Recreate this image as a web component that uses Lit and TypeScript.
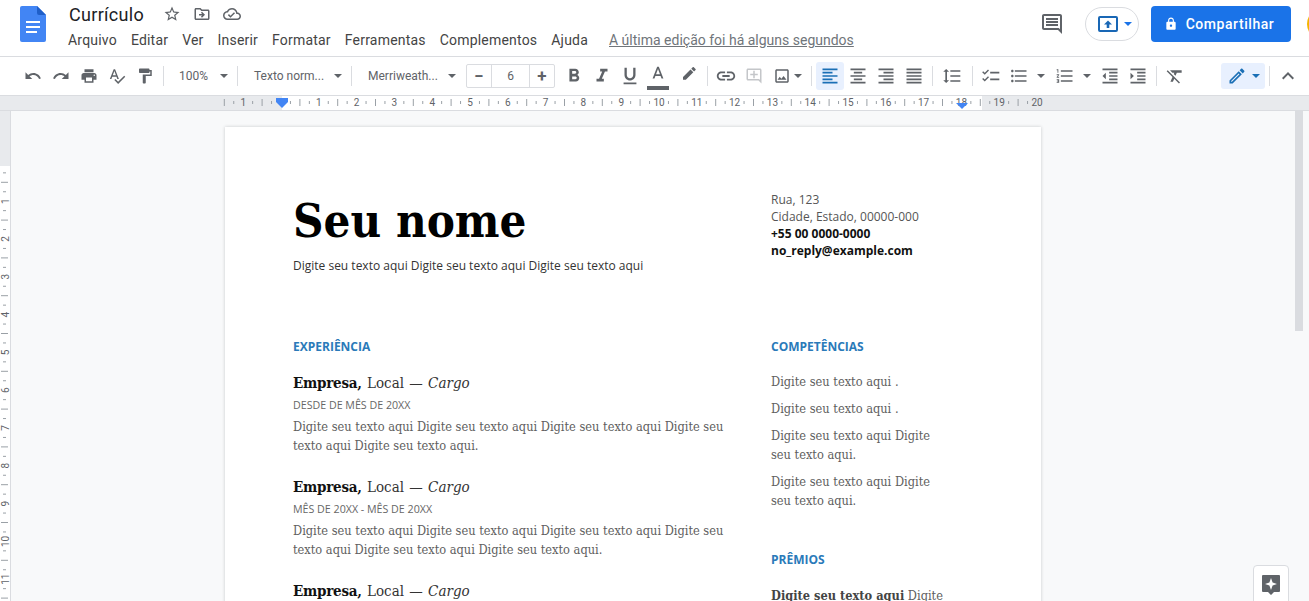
import { LitElement, html, css, svg } from "lit";
import { customElement } from "lit/decorators.js";

const ICONS: Record<string, string> = {
  undo: "M12.5 8c-2.65 0-5.05.99-6.9 2.6L2 7v9h9l-3.62-3.62c1.39-1.16 3.16-1.88 5.12-1.88 3.54 0 6.55 2.31 7.6 5.5l2.37-.78C21.08 11.03 17.15 8 12.5 8z",
  redo: "M18.4 10.6C16.55 8.99 14.15 8 11.5 8c-4.65 0-8.58 3.03-9.96 7.22L3.9 16c1.05-3.19 4.05-5.5 7.6-5.5 1.95 0 3.73.72 5.12 1.88L13 16h9V7l-3.6 3.6z",
  print: "M19 8H5c-1.66 0-3 1.34-3 3v6h4v4h12v-4h4v-6c0-1.66-1.34-3-3-3zm-3 11H8v-5h8v5zm3-7c-.55 0-1-.45-1-1s.45-1 1-1 1 .45 1 1-.45 1-1 1zm-1-9H6v4h12V3z",
  spell: "M12.45 16h2.09L9.43 3H7.57L2.46 16h2.09l1.12-3h5.64l1.14 3zm-6.02-5L8.5 5.48 10.57 11H6.43zm15.16.59l-8.09 8.09L9.83 16l-1.41 1.41 5.09 5.09L23 13l-1.41-1.41z",
  paint: "M18 4V3c0-.55-.45-1-1-1H5c-.55 0-1 .45-1 1v4c0 .55.45 1 1 1h12c.55 0 1-.45 1-1V6h1v4H9v11c0 .55.45 1 1 1h2c.55 0 1-.45 1-1v-9h8V4h-3z",
  bold: "M15.6 10.79c.97-.67 1.65-1.77 1.65-2.79 0-2.26-1.75-4-4-4H7v14h7.04c2.09 0 3.71-1.7 3.71-3.79 0-1.52-.86-2.82-2.15-3.42zM10 6.5h3c.83 0 1.5.67 1.5 1.5s-.67 1.5-1.5 1.5h-3v-3zm3.5 9H10v-3h3.5c.83 0 1.5.67 1.5 1.5s-.67 1.5-1.5 1.5z",
  italic: "M10 4v3h2.21l-3.42 8H6v3h8v-3h-2.21l3.42-8H18V4z",
  underline: "M12 17c3.31 0 6-2.69 6-6V3h-2.5v8c0 1.93-1.57 3.5-3.5 3.5S8.5 12.93 8.5 11V3H6v8c0 3.31 2.69 6 6 6zm-7 2v2h14v-2H5z",
  color: "M11 1L5.5 15h2.25l1.12-3h6.25l1.12 3h2.25L13 1h-2zm-1.38 9L12 3.67 14.38 10H9.62z",
  marker: "M17.75 7L14 3.25l-10 10V17h3.75l10-10zm2.96-2.96c.39-.39.39-1.02 0-1.41L18.37.29c-.39-.39-1.02-.39-1.41 0L15 2.25 18.75 6l1.96-1.96z",
  link: "M3.9 12c0-1.71 1.39-3.1 3.1-3.1h4V7H7c-2.76 0-5 2.24-5 5s2.24 5 5 5h4v-1.9H7c-1.71 0-3.1-1.39-3.1-3.1zM8 13h8v-2H8v2zm9-6h-4v1.9h4c1.71 0 3.1 1.39 3.1 3.1s-1.39 3.1-3.1 3.1h-4V17h4c2.76 0 5-2.24 5-5s-2.24-5-5-5z",
  addComment: "M20 2H4c-1.1 0-2 .9-2 2v12c0 1.1.9 2 2 2h14l4 4V4c0-1.1-.9-2-2-2zm0 15.17L18.83 16H4V4h16v13.17zM13 5h-2v4H7v2h4v4h2v-4h4V9h-4z",
  image: "M19 5v14H5V5h14m0-2H5c-1.1 0-2 .9-2 2v14c0 1.1.9 2 2 2h14c1.1 0 2-.9 2-2V5c0-1.1-.9-2-2-2zm-4.86 8.86l-3 3.87L9 13.14 6 17h12l-3.86-5.14z",
  left: "M15 15H3v2h12v-2zm0-8H3v2h12V7zM3 13h18v-2H3v2zm0 8h18v-2H3v2zM3 3v2h18V3H3z",
  center: "M7 15v2h10v-2H7zm-4 6h18v-2H3v2zm0-8h18v-2H3v2zm4-6v2h10V7H7zM3 3v2h18V3H3z",
  right: "M3 21h18v-2H3v2zm6-4h12v-2H9v2zm-6-4h18v-2H3v2zm6-4h12V7H9v2zM3 3v2h18V3H3z",
  justify: "M3 21h18v-2H3v2zm0-4h18v-2H3v2zm0-4h18v-2H3v2zm0-4h18V7H3v2zm0-6v2h18V3H3z",
  spacing: "M6 7h2.5L5 3.5 1.5 7H4v10H1.5L5 20.5 8.5 17H6V7zm4-2v2h12V5H10zm0 14h12v-2H10v2zm0-6h12v-2H10v2z",
  check: "M11 7h11v2H11zM11 15h11v2H11zM4.5 10.6L1.4 7.5l1.2-1.2 1.9 1.9 3.9-3.9 1.2 1.2zM4.5 18.6l-3.1-3.1 1.2-1.2 1.9 1.9 3.9-3.9 1.2 1.2z",
  bullets: "M4 10.5c-.83 0-1.5.67-1.5 1.5s.67 1.5 1.5 1.5 1.5-.67 1.5-1.5-.67-1.5-1.5-1.5zm0-6c-.83 0-1.5.67-1.5 1.5S3.17 7.5 4 7.5 5.5 6.83 5.5 6 4.83 4.5 4 4.5zm0 12c-.83 0-1.5.68-1.5 1.5s.68 1.5 1.5 1.5 1.5-.68 1.5-1.5-.67-1.5-1.5-1.5zM7 19h14v-2H7v2zm0-6h14v-2H7v2zm0-8v2h14V5H7z",
  numbers: "M2 17h2v.5H3v1h1v.5H2v1h3v-4H2v1zm1-9h1V4H2v1h1v3zm-1 3h1.8L2 13.1v.9h3v-1H3.2L5 10.9V10H2v1zm5-6v2h14V5H7zm0 14h14v-2H7v2zm0-6h14v-2H7v2z",
  outdent: "M11 17h10v-2H11v2zm-8-5l4 4V8l-4 4zm0 9h18v-2H3v2zM3 3v2h18V3H3zm8 6h10V7H11v2zm0 4h10v-2H11v2z",
  indent: "M3 21h18v-2H3v2zM3 8v8l4-4-4-4zm8 9h10v-2H11v2zM3 3v2h18V3H3zm8 6h10V7H11v2zm0 4h10v-2H11v2z",
  clear: "M3.27 5L2 6.27l6.97 6.97L6.5 19h3l1.57-3.66L16.73 21 18 19.73 3.55 5.27 3.27 5zM6 5v.18L8.82 8h2.4l-.72 1.68 2.1 2.1L14.21 8H20V5H6z",
  pencil: "M14.06 9.02l.92.92L5.92 19H5v-.92l9.06-9.06M17.66 3c-.25 0-.51.1-.7.29l-1.83 1.83 3.75 3.75 1.83-1.83c.39-.39.39-1.02 0-1.41l-2.34-2.34c-.2-.2-.45-.29-.71-.29zm-3.6 3.19L3 17.25V21h3.75L17.81 9.94l-3.75-3.75z",
  chevron: "M7.41 15.41L12 10.83l4.59 4.58L18 14l-6-6-6 6z",
  comments: "M21.99 4c0-1.1-.89-2-1.99-2H4c-1.1 0-2 .9-2 2v12c0 1.1.9 2 2 2h14l4 4-.01-18zM20 4v13.17L18.83 16H4V4h16zM6 12h12v2H6zm0-3h12v2H6zm0-3h12v2H6z",
  lock: "M18 8h-1V6c0-2.76-2.24-5-5-5S7 3.24 7 6v2H6c-1.1 0-2 .9-2 2v10c0 1.1.9 2 2 2h12c1.1 0 2-.9 2-2V10c0-1.1-.9-2-2-2zm-6 9c-1.1 0-2-.9-2-2s.9-2 2-2 2 .9 2 2-.9 2-2 2zm3.1-9H8.9V6c0-1.71 1.39-3.1 3.1-3.1 1.71 0 3.1 1.39 3.1 3.1v2z",
  star: "M22 9.24l-7.19-.62L12 2 9.19 8.63 2 9.24l5.46 4.73L5.82 21 12 17.27 18.18 21l-1.63-7.03L22 9.24zM12 15.4l-3.76 2.27 1-4.28-3.32-2.88 4.38-.38L12 6.1l1.71 4.04 4.38.38-3.32 2.88 1 4.28L12 15.4z",
  folder: "M20 6h-8l-2-2H4c-1.1 0-2 .9-2 2v12c0 1.1.9 2 2 2h16c1.1 0 2-.9 2-2V8c0-1.1-.9-2-2-2zm0 12H4V6h5.17l2 2H20v10zM12.16 12H8v2h4.16l-1.59 1.59L12 17l4-4-4-4-1.41 1.41z",
  cloud: "M19.35 10.04C18.67 6.59 15.64 4 12 4 9.11 4 6.6 5.64 5.35 8.04 2.34 8.36 0 10.91 0 14c0 3.31 2.69 6 6 6h13c2.76 0 5-2.24 5-5 0-2.64-2.05-4.78-4.65-4.96zM19 18H6c-2.21 0-4-1.79-4-4 0-2.05 1.53-3.76 3.56-3.97l1.07-.11.5-.95C8.08 7.14 9.94 6 12 6c2.62 0 4.88 1.86 5.39 4.43l.3 1.5 1.53.11c1.56.1 2.78 1.41 2.78 2.96 0 1.65-1.35 3-3 3zm-9-3.82l-2.09-2.09L6.5 13.5 10 17l6.01-6.01-1.41-1.41z",
};

const icon = (name: string, size = 18, cls = "") => html`<svg class="ic ${cls}" width=${size} height=${size} viewBox="0 0 24 24"><path d=${ICONS[name]}></path></svg>`;
const btn = (name: string, size = 18, cls = "") => html`<div class="btn ${cls}">${icon(name, size)}</div>`;
const caret = html`<span class="caret"></span>`;
const sep = html`<span class="sep"></span>`;

const MENU = ["Arquivo", "Editar", "Ver", "Inserir", "Formatar", "Ferramentas", "Complementos", "Ajuda"];
const CM = 37.8;

function hRuler() {
  const ticks = [];
  for (let n = -2; n <= 20; n++) {
    const x = 281 + n * CM;
    if (n !== 0 && n >= -1) {
      ticks.push(svg`<text x=${x} y="10" text-anchor="middle">${Math.abs(n)}</text>`);
    }
    if (n === -2) {
      ticks.push(svg`<path d="M${x + 18.9} 3v7M${x + 28.35} 5v3" />`);
    } else if (n < 20) {
      ticks.push(svg`<path d="M${x + 9.45} 5v3M${x + 18.9} 3v7M${x + 28.35} 5v3" />`);
    }
  }
  return html`<svg class="hruler" width="1309" height="14" viewBox="0 0 1309 14">
    <rect x="282" y="0" width="700" height="14" fill="#fff" stroke="none"></rect>
    ${ticks}
    <path class="marker" d="M276 2h12v4l-6 6-6-6z"></path>
    <path class="marker" d="M956 7h12l-6 6z"></path>
  </svg>`;
}

function vRuler() {
  const ticks = [];
  for (let n = 0; n <= 11; n++) {
    const y = 52.4 + n * CM;
    if (n > 0) {
      ticks.push(svg`<text x="0" y="0" text-anchor="middle" transform="translate(8.5 ${y}) rotate(-90)">${n}</text>`);
    }
    ticks.push(svg`<path d="M3 ${y + 9.45}h3M1 ${y + 18.9}h7M3 ${y + 28.35}h3" />`);
  }
  return html`<svg class="vruler" width="10" height="491" viewBox="0 0 10 491">
    <rect x="0" y="55" width="10" height="436" fill="#fff" stroke="none"></rect>
    ${ticks}
  </svg>`;
}

@customElement("app-root")
export class AppRoot extends LitElement {
  static styles = css`
    :host {
      display: flex;
      flex-direction: column;
      height: 601px;
      overflow: hidden;
      background: #f8f9fa;
      font-family: Roboto, sans-serif;
      color: #3c4043;
    }
    .ic { fill: #5f6368; display: block; flex: none; }

    .top {
      display: flex;
      height: 56px;
      flex: none;
      background: #fff;
      border-bottom: 1px solid #dadce0;
      box-sizing: content-box;
    }
    .logo { margin: 6px 23px 0 20px; flex: none; }
    .titles { flex: 1; display: flex; flex-direction: column; }
    .title-row { display: flex; align-items: center; height: 28px; }
    .doc-title { font: 18px Roboto, sans-serif; color: #202124; width: 94px; letter-spacing: .3px; }
    .title-row .ic { margin-right: 12px; }
    .menu { display: flex; align-items: center; gap: 14px; font-size: 14px; letter-spacing: .2px; color: #444; margin: 3px 0 0 -1px; height: 18px; }
    .last-edit { color: #70757a; text-decoration: underline; margin-left: 7px; letter-spacing: 0; }
    .actions { display: flex; align-items: center; height: 48px; flex: none; }
    .comments { margin-right: 21px; }
    .pill {
      width: 54px; height: 34px; border: 1px solid #dadce0; border-radius: 17px; box-sizing: border-box;
      display: flex; align-items: center; gap: 6px; margin-right: 12px; padding-left: 12px;
    }
    .pill .caret { border-top-color: #1a73e8; margin: 0; }
    .share {
      width: 140px; height: 36px; background: #1a73e8; border-radius: 4px; box-sizing: border-box; padding-right: 4px;
      color: #fff; font: 500 14px Roboto, sans-serif; letter-spacing: .55px;
      display: flex; align-items: center; justify-content: center; gap: 8px;
    }
    .share .ic { fill: #fff; }
    .avatar { width: 32px; height: 32px; border-radius: 50%; background: #f4b400; margin-left: 16px; margin-right: -30px; flex: none; }

    .toolbar {
      display: flex; align-items: center; height: 38px; flex: none; padding-left: 19px;
      background: #fff; border-bottom: 1px solid #dadce0; color: #5f6368;
    }
    .btn { width: 28px; height: 28px; display: flex; align-items: center; justify-content: center; flex: none; border-radius: 3px; box-sizing: border-box; }
    .btn.on { background: #e8f0fe; }
    .btn.on .ic { fill: #1a6fb5; }
    .btn.off .ic { fill: #c4c6c9; }
    .sep { width: 1px; height: 20px; background: #dadce0; flex: none; margin: 0 4px; }
    .caret { width: 0; height: 0; border: 4px solid transparent; border-bottom: 0; flex: none; display: block; border-top-color: #5f6368; }
    .select { display: flex; align-items: center; justify-content: space-between; font-size: 12px; color: #5f6368; flex: none; box-sizing: border-box; }
    .sel-zoom { width: 65px; padding: 0 5px 0 11px; }
    .sel-style { width: 105px; padding: 0 5px 0 12px; }
    .sel-font { width: 104px; padding: 0 4px 0 12px; }
    .stepper { display: flex; height: 24px; width: 89px; border: 1px solid #dadce0; box-sizing: border-box; flex: none; margin: 0 5px 0 6px; border-radius: 2px; }
    .stepper > div { display: flex; align-items: center; justify-content: center; font-size: 12px; color: #5f6368; }
    .stepper .step { width: 24px; font-size: 17px; font-weight: 700; }
    .stepper .val { flex: 1; border: solid #dadce0; border-width: 0 1px; }
    .color-btn { flex-direction: column; justify-content: flex-start; margin-right: 3px; padding-top: 4px; }
    .color-btn .bar { width: 22px; height: 4px; background: #5f6368; }
    .img-btn { width: 24px; justify-content: flex-start; padding-left: 5px; }
    .img-caret { margin: 0 5px 0 2px; }
    .list-caret { margin: 0 6px 0 4px; }
    .list-caret.last { margin-right: 5px; }
    .spacing-btn { margin: 0 2px 0 1px; }
    .edit { width: 44px; height: 26px; background: #e8f0fe; border-radius: 3px; display: flex; align-items: center; justify-content: center; gap: 5px; margin-left: 32px; flex: none; }
    .edit .ic { fill: #1a6fb5; }
    .edit .caret { border-top-color: #1a6fb5; }

    .hruler { display: block; flex: none; background: #e8eaed; border-bottom: 1px solid #dadce0; box-sizing: content-box; }
    .hruler text, .vruler text { font: 10px Roboto, sans-serif; fill: #5f6368; stroke: none; }
    .hruler path, .vruler path { stroke: #9aa0a6; stroke-width: 1; fill: none; }
    .hruler .marker { fill: #4285f4; stroke: none; }

    .main { flex: 1; display: flex; min-height: 0; position: relative; }
    .vruler { display: block; flex: none; background: #e8eaed; border-right: 1px solid #dadce0; box-sizing: content-box; }
    .scroller { flex: 1; overflow: hidden; padding: 16px 0 0 214px; }
    .scrollbar { width: 15px; flex: none; }
    .thumb { width: 8px; height: 220px; background: #dadce0; margin-left: 1px; }
    .explore {
      position: absolute; right: 20px; top: 454px; width: 36px; height: 40px;
      background: #fff; border: 1px solid #dadce0; border-radius: 4px; box-sizing: border-box;
      display: flex; justify-content: center; padding-top: 8px;
    }

    .page {
      width: 816px; background: #fff; box-sizing: border-box; height: 900px;
      box-shadow: 0 0 3px rgba(60, 64, 67, .25);
      padding: 64px 0 0 68px;
      display: grid;
      grid-template-columns: 478px 250px;
      grid-template-rows: 148px auto;
      align-content: start;
      font-family: "Open Sans", sans-serif;
      color: #666;
    }
    .name { font: 700 47px/58px "DejaVu Serif Condensed", "DejaVu Serif", serif; color: #000; margin: 1px 0 7px; }
    .lead { font-size: 12px; line-height: 17px; color: #333; }
    .contact { font-size: 12px; line-height: 17px; color: #555; }
    .contact b { color: #111; display: block; font-weight: 700; }
    .head { font-size: 12px; line-height: 16px; font-weight: 700; color: #2a7ab9; margin: 0; }
    .job { font: 15px/20px "DejaVu Serif Condensed", "DejaVu Serif", serif; color: #333; word-spacing: 1px; }
    .job b { color: #111; letter-spacing: -.25px; }
    .job-first { margin-top: 18px; }
    .job-next { margin-top: 22px; }
    .date { font-size: 10.67px; line-height: 14px; margin-top: 5px; color: #666; }
    .text { font: 12.7px/19px "DejaVu Serif Condensed", "DejaVu Serif", serif; color: #606060; margin-top: 5px; white-space: nowrap; }
    .skill { font: 12.7px/19px "DejaVu Serif Condensed", "DejaVu Serif", serif; color: #606060; white-space: nowrap; margin-top: 8px; }
    .skill.first { margin-top: 17px; }
    .skill.after-awards { margin-top: 18px; }
    .awards { margin-top: 42px; }
    .skill b { color: #444; }
  `;

  private job(date: string, line2: string) {
    return html`
      <div class="date">${date}</div>
      <div class="text">Digite seu texto aqui Digite seu texto aqui Digite seu texto aqui Digite seu<br />${line2}</div>
    `;
  }

  private jobTitle(cls: string) {
    return html`<div class="job ${cls}"><b>Empresa,</b> Local — <i>Cargo</i></div>`;
  }

  render() {
    return html`
      <div class="top">
        <svg class="logo" width="26" height="36" viewBox="0 0 26 36">
          <path d="M2 0h15l9 9v25a2 2 0 0 1-2 2H2a2 2 0 0 1-2-2V2a2 2 0 0 1 2-2z" fill="#4285f4"></path>
          <path d="M17 0l9 9h-7a2 2 0 0 1-2-2z" fill="#1f5fc9"></path>
          <path d="M6 15h14v2H6zM6 20h14v2H6zM6 25h11v2H6z" fill="#fff"></path>
        </svg>
        <div class="titles">
          <div class="title-row">
            <div class="doc-title">Currículo</div>
            ${icon("star", 18)} ${icon("folder", 18)} ${icon("cloud", 18)}
          </div>
          <div class="menu">
            ${MENU.map((m) => html`<span>${m}</span>`)}
            <span class="last-edit">A última edição foi há alguns segundos</span>
          </div>
        </div>
        <div class="actions">
          ${icon("comments", 24, "comments")}
          <div class="pill">
            <svg width="20" height="16" viewBox="0 0 20 16">
              <rect x="1" y="1" width="18" height="14" rx="1" fill="none" stroke="#1967b5" stroke-width="2"></rect>
              <path d="M10 4.5l-4 4h2.7V12h2.6V8.5H14z" fill="#1967b5"></path>
            </svg>
            ${caret}
          </div>
          <div class="share">${icon("lock", 14)}Compartilhar</div>
          <div class="avatar"></div>
        </div>
      </div>

      <div class="toolbar">
        ${btn("undo")}${btn("redo")}${btn("print")}${btn("spell")}${btn("paint")}${sep}
        <div class="select sel-zoom"><span>100%</span>${caret}</div>${sep}
        <div class="select sel-style"><span>Texto norm...</span>${caret}</div>${sep}
        <div class="select sel-font"><span>Merriweath...</span>${caret}</div>
        <div class="stepper"><div class="step">−</div><div class="val">6</div><div class="step">+</div></div>
        ${btn("bold", 22)}${btn("italic", 22)}${btn("underline", 22)}
        <div class="btn color-btn">${icon("color", 20)}<div class="bar"></div></div>
        ${btn("marker", 18)}${sep}
        ${btn("link", 22)}${btn("addComment", 18, "off")}${btn("image", 18, "img-btn")}
        <span class="caret img-caret"></span>${sep}
        ${btn("left", 20, "on")}${btn("center", 20)}${btn("right", 20)}${btn("justify", 20)}${sep}
        ${btn("spacing", 20, "spacing-btn")}${sep}
        ${btn("check", 20)}${btn("bullets", 20)}<span class="caret list-caret"></span>
        ${btn("numbers", 20)}<span class="caret list-caret last"></span>
        ${btn("outdent", 20)}${btn("indent", 20)}${sep}${btn("clear", 20)}
        <div class="edit">${icon("pencil", 20)}${caret}</div>${sep}
        ${btn("chevron", 24)}
      </div>

      ${hRuler()}

      <div class="main">
        ${vRuler()}
        <div class="scroller">
          <div class="page">
            <div>
              <h1 class="name">Seu nome</h1>
              <div class="lead">Digite seu texto aqui Digite seu texto aqui Digite seu texto aqui</div>
            </div>
            <div class="contact">
              Rua, 123<br />Cidade, Estado, 00000-000
              <b>+55 00 0000-0000</b>
              <b>no_reply@example.com</b>
            </div>
            <div>
              <h2 class="head">EXPERIÊNCIA</h2>
              ${this.jobTitle("job-first")}
              ${this.job("DESDE DE MÊS DE 20XX", "texto aqui Digite seu texto aqui.")}
              ${this.jobTitle("job-next")}
              ${this.job("MÊS DE 20XX - MÊS DE 20XX", "texto aqui Digite seu texto aqui Digite seu texto aqui.")}
              ${this.jobTitle("job-next")}
            </div>
            <div>
              <h2 class="head">COMPETÊNCIAS</h2>
              <div class="skill first">Digite seu texto aqui .</div>
              <div class="skill">Digite seu texto aqui .</div>
              <div class="skill">Digite seu texto aqui Digite<br />seu texto aqui.</div>
              <div class="skill">Digite seu texto aqui Digite<br />seu texto aqui.</div>
              <h2 class="head awards">PRÊMIOS</h2>
              <div class="skill after-awards"><b>Digite seu texto aqui</b> Digite</div>
            </div>
          </div>
        </div>
        <div class="scrollbar"><div class="thumb"></div></div>
        <div class="explore">
          <svg width="20" height="22" viewBox="0 0 20 22">
            <path d="M2 1h16a1 1 0 0 1 1 1v15a1 1 0 0 1-1 1h-5l-3 3-3-3H2a1 1 0 0 1-1-1V2a1 1 0 0 1 1-1z" fill="#5f6368"></path>
            <path d="M10 4l1.6 4.4L16 10l-4.4 1.6L10 16l-1.6-4.4L4 10l4.4-1.6z" fill="#fff"></path>
          </svg>
        </div>
      </div>
    `;
  }
}
